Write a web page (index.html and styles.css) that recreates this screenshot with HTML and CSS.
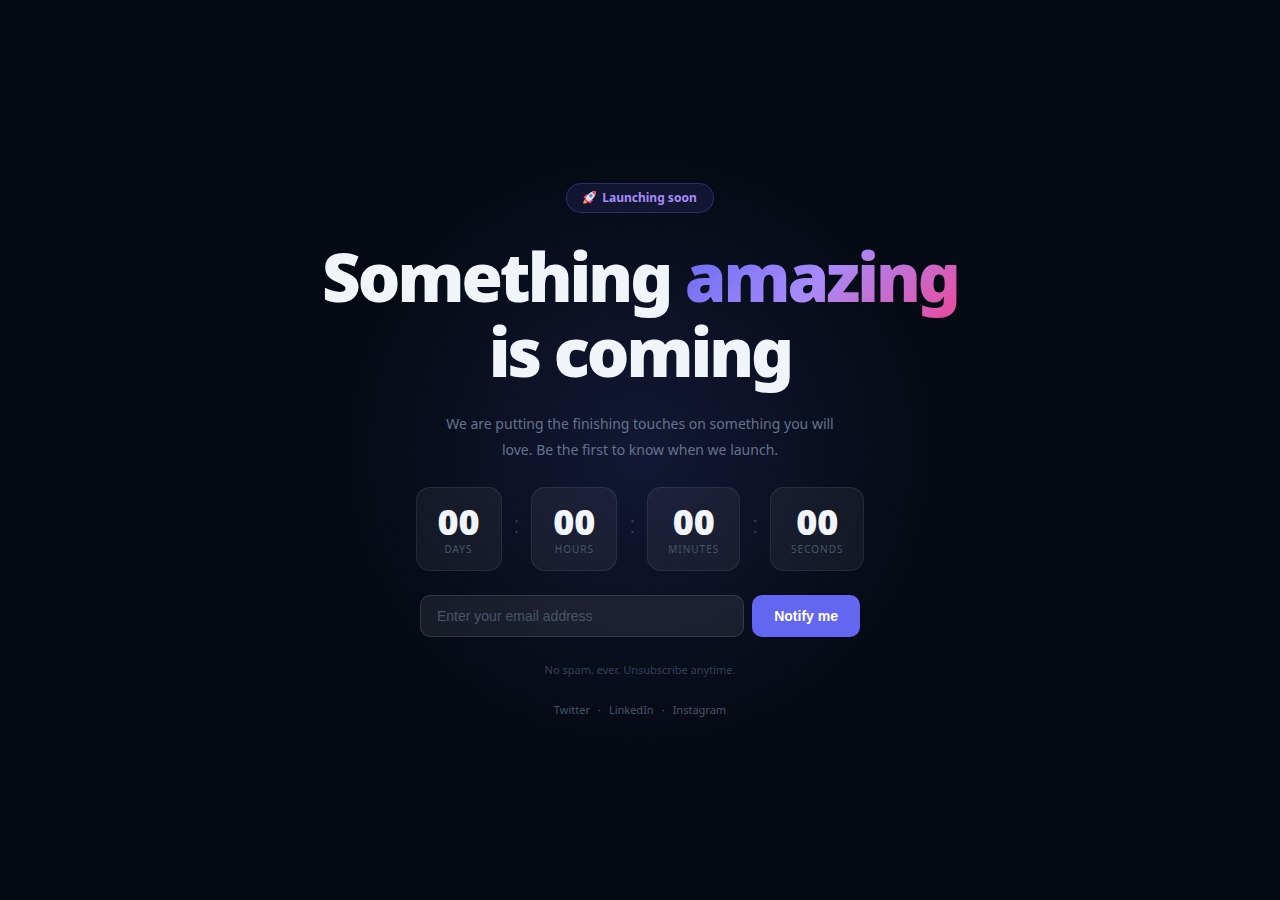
FILE: index.html
```html
<!DOCTYPE html>
<html lang="en">
<head>
    <meta charset="UTF-8">
    <meta name="viewport" content="width=device-width, initial-scale=1.0">
    <title>Coming Soon</title>
    <link rel="stylesheet" href="styles.css">
</head>
<body>
    <main class="container">
        <div class="badge">
            <svg class="rocket" viewBox="0 0 36 36" aria-hidden="true">
                <path fill="#a0041e" d="M1 17l8-7 16 1 1 16-7 8s.001-5.999-6-12-12-6-12-6z"/>
                <path fill="#ffac33" d="M.973 35s-.036-7.979 2.985-11S15 21.187 15 21.187 14.999 29 11.999 32C9 35 .973 35 .973 35z"/>
                <path fill="#f04a7a" d="M1 17l9-8 8 3-9 11zM19 35l8-9-3-8-11 9zM3 26c3-5 7-7 11-4 2 4 0 8-4 11-2-4-4-6-7-7z"/>
                <path fill="#dfe3ee" d="M35.999 0S25 0 18 6c-5 4-9 9-11 15l8 8c6-2 11-6 15-11 6-7 5.999-18 5.999-18z"/>
                <path fill="#ef4468" d="M36 0s-5 0-11 2c1 4 5 8 9 9 2-6 2-11 2-11z"/>
                <circle fill="#6687b8" cx="22" cy="13" r="5"/>
            </svg>
            <span>Launching soon</span>
        </div>

        <h1>Something <span class="gradient-text">amazing</span><br>is coming</h1>
        <p class="subtitle">We are putting the finishing touches on something you will love. Be the first to know when we launch.</p>

        <div class="countdown">
            <div class="unit"><div class="num">00</div><div class="label">Days</div></div>
            <div class="sep">:</div>
            <div class="unit"><div class="num">00</div><div class="label">Hours</div></div>
            <div class="sep">:</div>
            <div class="unit"><div class="num">00</div><div class="label">Minutes</div></div>
            <div class="sep">:</div>
            <div class="unit"><div class="num">00</div><div class="label">Seconds</div></div>
        </div>

        <form class="notify-form">
            <input type="email" placeholder="Enter your email address" aria-label="Email address">
            <button type="submit">Notify me</button>
        </form>

        <p class="note">No spam, ever. Unsubscribe anytime.</p>
        <nav class="socials">
            <a href="#">Twitter</a>
            <span>·</span>
            <a href="#">LinkedIn</a>
            <span>·</span>
            <a href="#">Instagram</a>
        </nav>
    </main>
</body>
</html>
```
FILE: styles.css
```css
* {
    box-sizing: border-box;
    margin: 0;
    padding: 0;
}

body {
    font-family: "Segoe UI", "Noto Sans", sans-serif;
    background: #050a14;
    color: #f1f5f9;
    min-height: 100vh;
    display: flex;
    align-items: center;
    justify-content: center;
    overflow: hidden;
}

/* soft glow behind the content */
body::before {
    content: "";
    position: absolute;
    top: 50%;
    left: 50%;
    width: 600px;
    height: 600px;
    transform: translate(-50%, -50%);
    background: radial-gradient(circle, rgba(99, 102, 241, 0.15), transparent 70%);
}

.container {
    position: relative;
    display: flex;
    flex-direction: column;
    align-items: center;
    text-align: center;
    max-width: 700px;
    padding: 0 20px;
}

.badge {
    display: flex;
    align-items: center;
    gap: 6px;
    height: 30px;
    padding: 0 16px;
    margin-bottom: 26px;
    border: 1px solid rgba(99, 102, 241, 0.3);
    border-radius: 20px;
    background: rgba(99, 102, 241, 0.12);
    color: #a78bfa;
    font-size: 12px;
    font-weight: 700;
}

.rocket {
    width: 13px;
    height: 13px;
}

h1 {
    font-size: 67px;
    font-weight: 900;
    line-height: 75px;
    letter-spacing: -3px;
    margin-bottom: 22px;
    white-space: nowrap;
}

.gradient-text {
    background: linear-gradient(135deg, #6366f1, #a78bfa, #ec4899);
    -webkit-background-clip: text;
    background-clip: text;
    color: transparent;
}

.subtitle {
    max-width: 420px;
    font-size: 14px;
    line-height: 26px;
    color: #64748b;
    margin-bottom: 24px;
}

.countdown {
    display: flex;
    align-items: center;
    gap: 12px;
    margin-bottom: 24px;
}

.unit {
    min-width: 86px;
    height: 84px;
    padding: 16px 20px;
    border: 1px solid rgba(255, 255, 255, 0.08);
    border-radius: 14px;
    background: rgba(255, 255, 255, 0.05);
}

.num {
    font-size: 36px;
    font-weight: 900;
    line-height: 36px;
}

.label {
    margin-top: 2px;
    font-size: 10px;
    line-height: 14px;
    letter-spacing: 1px;
    text-transform: uppercase;
    color: #475569;
}

.sep {
    margin-bottom: 10px;
    font-size: 24px;
    font-weight: 300;
    line-height: 34px;
    color: #334155;
}

.notify-form {
    display: flex;
    gap: 8px;
    width: 100%;
    max-width: 440px;
    margin-bottom: 25px;
}

.notify-form input {
    flex: 1;
    min-width: 0;
    height: 42px;
    padding: 0 16px;
    border: 1px solid rgba(255, 255, 255, 0.12);
    border-radius: 10px;
    background: rgba(255, 255, 255, 0.07);
    color: #f1f5f9;
    font: 14px "Liberation Sans", Arial, sans-serif;
}

.notify-form input::placeholder {
    color: #475569;
}

.notify-form button {
    padding: 0 22px;
    border: none;
    border-radius: 10px;
    background: #6366f1;
    color: #fff;
    font: 700 14px "Liberation Sans", Arial, sans-serif;
    cursor: pointer;
}

.note {
    font-size: 11px;
    line-height: 16px;
    color: #334155;
    margin-bottom: 24px;
}

.socials {
    display: flex;
    gap: 8px;
    font-size: 11px;
    line-height: 16px;
    color: #475569;
}

.socials a {
    color: #475569;
    text-decoration: none;
}
```
